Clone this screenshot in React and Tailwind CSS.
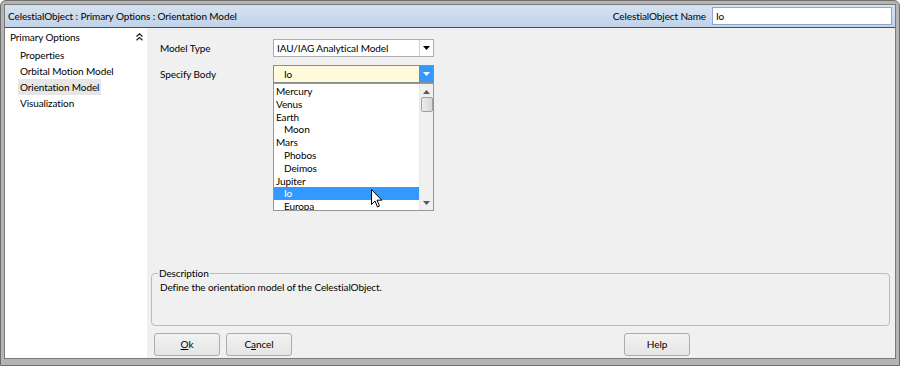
import { useState } from "react";

const bodies = [
  { name: "Mercury", indent: false },
  { name: "Venus", indent: false },
  { name: "Earth", indent: false },
  { name: "Moon", indent: true },
  { name: "Mars", indent: false },
  { name: "Phobos", indent: true },
  { name: "Deimos", indent: true },
  { name: "Jupiter", indent: false },
  { name: "Io", indent: true },
  { name: "Europa", indent: true },
];

const navItems = ["Properties", "Orbital Motion Model", "Orientation Model", "Visualization"];

function DownTriangle({ color = "#000" }) {
  return (
    <svg width="7" height="4" viewBox="0 0 7 4">
      <path d="M0 0h7L3.5 4z" fill={color} />
    </svg>
  );
}

function Button({ children }) {
  return (
    <button className="w-[66px] h-[23px] rounded-[3px] border border-[#acacac] bg-gradient-to-b from-[#f2f2f2] to-[#e5e5e5] text-black">
      {children}
    </button>
  );
}

function BodyList({ selected }) {
  return (
    <div className="absolute left-0 top-[18px] w-[161px] h-[128px] bg-white border border-[#969696] flex overflow-hidden">
      <div className="flex-1 flex flex-col pt-[1px]">
        {bodies.map((b) => (
          <div
            key={b.name}
            className={`h-[12.8px] leading-[12.8px] shrink-0 ${b.indent ? "pl-[10px]" : "pl-[2px]"} ${
              b.name === selected ? "bg-[#3399ff] text-white" : "text-black"
            }`}
          >
            {b.name}
          </div>
        ))}
      </div>
      <div className="w-[14px] bg-[#f0f0f0] border-l border-[#e8e8e8] flex flex-col items-center">
        <svg width="7" height="4" viewBox="0 0 7 4" className="mt-[6px]">
          <path d="M0 4h7L3.5 0z" fill="#5a5a5a" />
        </svg>
        <div className="mt-[3px] w-[12px] h-[15px] rounded-[2px] border border-[#a0a0a0] bg-gradient-to-r from-[#ededed] to-[#d8d8d8]" />
        <div className="flex-1" />
        <div className="mb-[5px]">
          <DownTriangle color="#5a5a5a" />
        </div>
      </div>
    </div>
  );
}

export default function App() {
  const [selected] = useState("Io");

  return (
    <div
      className="w-[900px] h-[366px] bg-[#b4b4b4] border border-[#6e6e6e] rounded-tl-[6px] rounded-tr-[6px] p-[3px] pt-[3px] pb-[6px] text-[10px] tracking-[-0.1px] text-black"
      style={{ fontFamily: 'Lato, "Open Sans", sans-serif' }}
    >
      <div className="w-full h-full border border-[#7a7a7a] flex flex-col bg-[#f0f0f0]">
        {/* header bar */}
        <div className="h-[23px] shrink-0 flex items-center pl-[3px] pr-[3px] bg-gradient-to-b from-[#d6e2f1] to-[#c1d3e9] border-b border-[#4c4c4c]">
          <span>CelestialObject : Primary Options : Orientation Model</span>
          <div className="flex-1" />
          <span className="mr-[6px]">CelestialObject Name</span>
          <div className="w-[180px] h-[18px] bg-white border border-[#8fa7c9] pl-[3px] leading-[16px]">
            Io
          </div>
        </div>

        <div className="flex-1 flex min-h-0">
          {/* left nav */}
          <div className="w-[142px] shrink-0 bg-white flex flex-col pt-[2px] pl-[5px] pr-[2px]">
            <div className="flex items-center justify-between h-[14px] pr-[2px]">
              <span>Primary Options</span>
              <svg width="7" height="8" viewBox="0 0 7 8">
                <path d="M0.5 3.5L3.5 0.8L6.5 3.5M0.5 7.2L3.5 4.5L6.5 7.2" stroke="#222" strokeWidth="1.3" fill="none" />
              </svg>
            </div>
            <div className="flex flex-col mt-[3px] pl-[10px]">
              {navItems.map((item) => (
                <div
                  key={item}
                  className={`h-[16px] leading-[16px] w-max pl-[2px] pr-[2px] -ml-[2px] ${
                    item === "Orientation Model" ? "bg-[#e6e6e6]" : ""
                  }`}
                >
                  {item}
                </div>
              ))}
            </div>
          </div>

          {/* main content */}
          <div className="flex-1 flex flex-col pt-[11px]">
            <div className="flex items-center pl-[13px] h-[18px]">
              <span className="w-[113px]">Model Type</span>
              <div className="w-[161px] h-[18px] bg-white border border-[#acacac] flex">
                <span className="flex-1 pl-[3px] leading-[16px]">IAU/IAG Analytical Model</span>
                <div className="w-[14px] border-l border-[#d0d0d0] flex items-center justify-center">
                  <DownTriangle />
                </div>
              </div>
            </div>

            <div className="flex items-center pl-[13px] h-[18px] mt-[8px]">
              <span className="w-[113px]">Specify Body</span>
              <div className="relative w-[161px] h-[18px]">
                <div className="w-full h-full bg-[#fffbdc] border border-[#8d8d8d] flex">
                  <span className="flex-1 pl-[10px] leading-[16px]">{selected}</span>
                  <div className="w-[14px] bg-[#3399ff] flex items-center justify-center">
                    <DownTriangle color="#fff" />
                  </div>
                </div>
                <BodyList selected={selected} />
                <svg
                  className="absolute left-[98px] top-[124px]"
                  width="12"
                  height="19"
                  viewBox="0 0 12 19"
                >
                  <path
                    d="M0.5 0.5V15.5L4 12L6.5 18L8.5 17L6 11.2H10.8Z"
                    fill="#fff"
                    stroke="#000"
                    strokeWidth="1"
                    strokeLinejoin="round"
                  />
                </svg>
              </div>
            </div>

            <div className="flex-1" />

            <fieldset className="ml-[4px] mr-[5px] h-[59px] border border-[#bcbcbc] rounded-[4px] px-[7px] pb-[4px] -mt-[8px]">
              <legend className="px-[1px] -ml-[1px] leading-[12px]">Description</legend>
              <div className="mt-[1px] pl-[1px]">Define the orientation model of the CelestialObject.</div>
            </fieldset>

            <div className="flex items-center h-[23px] mt-[7px] mb-[2px] pl-[7px] gap-[6px]">
              <Button>
                <span className="underline">O</span>k
              </Button>
              <Button>
                C<span className="underline">a</span>ncel
              </Button>
              <div className="w-[320px]" />
              <Button>Help</Button>
            </div>
          </div>
        </div>
      </div>
    </div>
  );
}
